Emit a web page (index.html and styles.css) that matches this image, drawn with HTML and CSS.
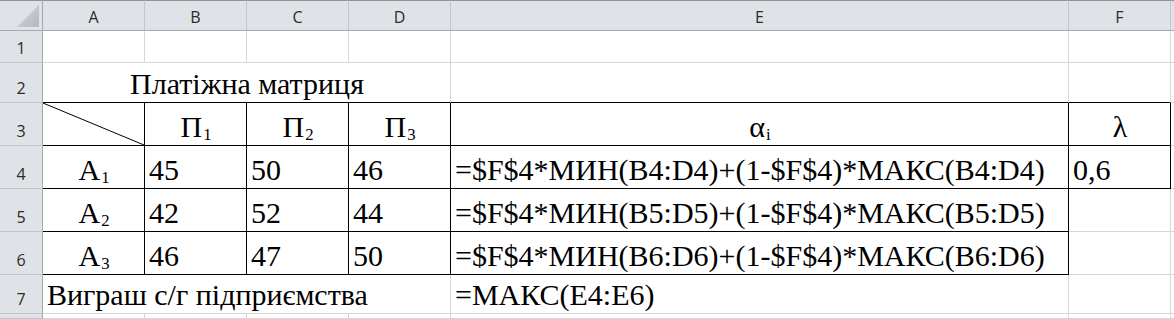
FILE: index.html
```html
<!DOCTYPE html>
<html lang="uk">
<head>
<meta charset="utf-8">
<title>Платіжна матриця</title>
<link rel="stylesheet" href="styles.css">
</head>
<body>
<div class="sheet">
  <!-- header row -->
  <div class="hd corner"><svg class="tri" width="42" height="30" viewBox="0 0 42 30"><defs><linearGradient id="g" x1="0" y1="0" x2="1" y2="1"><stop offset="0" stop-color="#d3d6da"/><stop offset="1" stop-color="#b4b8bc"/></linearGradient></defs><polygon points="39,5 39,27 17,27" fill="url(#g)"/></svg></div>
  <div class="hd ch">A</div>
  <div class="hd ch">B</div>
  <div class="hd ch">C</div>
  <div class="hd ch">D</div>
  <div class="hd ch">E</div>
  <div class="hd ch">F</div>
  <div class="hd ch"></div>

  <!-- row 1 -->
  <div class="rh">1</div>
  <div class="c"></div><div class="c"></div><div class="c"></div><div class="c"></div><div class="c"></div><div class="c"></div><div class="c"></div>

  <!-- row 2 -->
  <div class="rh">2</div>
  <div class="c span4 mid kb">Платіжна матриця</div>
  <div class="c kb"></div>
  <div class="c kb"></div>
  <div class="c"></div>

  <!-- row 3 -->
  <div class="rh">3</div>
  <div class="c kb kr diag"><svg class="slash" viewBox="0 0 100 41" preserveAspectRatio="none"><line x1="0" y1="0" x2="100" y2="41" stroke="#000" stroke-width="1" vector-effect="non-scaling-stroke"/></svg></div>
  <div class="c kb kr mid">П<sub class="ix">1</sub></div>
  <div class="c kb kr mid">П<sub class="ix">2</sub></div>
  <div class="c kb kr mid">П<sub class="ix">3</sub></div>
  <div class="c kb kr mid">α<sub class="ix">i</sub></div>
  <div class="c kb kr mid">λ</div>
  <div class="c"></div>

  <!-- row 4 -->
  <div class="rh">4</div>
  <div class="c kb kr mid">A<sub class="ix">1</sub></div>
  <div class="c kb kr">45</div>
  <div class="c kb kr">50</div>
  <div class="c kb kr">46</div>
  <div class="c kb kr">=$F$4*МИН(B4:D4)+(1-$F$4)*МАКС(B4:D4)</div>
  <div class="c kb kr">0,6</div>
  <div class="c"></div>

  <!-- row 5 -->
  <div class="rh">5</div>
  <div class="c kb kr mid">A<sub class="ix">2</sub></div>
  <div class="c kb kr">42</div>
  <div class="c kb kr">52</div>
  <div class="c kb kr">44</div>
  <div class="c kb kr">=$F$4*МИН(B5:D5)+(1-$F$4)*МАКС(B5:D5)</div>
  <div class="c"></div>
  <div class="c"></div>

  <!-- row 6 -->
  <div class="rh">6</div>
  <div class="c kb kr mid">A<sub class="ix">3</sub></div>
  <div class="c kb kr">46</div>
  <div class="c kb kr">47</div>
  <div class="c kb kr">50</div>
  <div class="c kb kr">=$F$4*МИН(B6:D6)+(1-$F$4)*МАКС(B6:D6)</div>
  <div class="c"></div>
  <div class="c"></div>

  <!-- row 7 -->
  <div class="rh">7</div>
  <div class="c span4">Виграш с/г підприємства</div>
  <div class="c">=МАКС(E4:E6)</div>
  <div class="c"></div>
  <div class="c"></div>

  <!-- row 8 -->
  <div class="rh"></div>
  <div class="c"></div><div class="c"></div><div class="c"></div><div class="c"></div><div class="c"></div><div class="c"></div><div class="c"></div>
</div>
</body>
</html>
```

FILE: styles.css
```css
* { box-sizing: border-box; }
html, body { margin: 0; padding: 0; background: #fff; }
body { width: 1174px; height: 319px; overflow: hidden; }

.sheet {
  display: grid;
  grid-template-columns: 43px 102px 102px 102px 102px 618px 102px 1fr;
  grid-template-rows: 31px 32px 40px 43px 43px 43px 43px 39px 1fr;
  width: 1174px;
  height: 319px;
}

/* headers */
.hd {
  background: #dfe2e6;
  border-top: 1px solid #8f9296;
  border-bottom: 1px solid #a5a9ad;
  border-right: 1px solid #c2c6ca;
}
.corner { border-right-color: #a5a9ad; padding: 0; }
.tri { display: block; margin-top: -1px; }
.ch {
  display: flex;
  align-items: flex-end;
  justify-content: center;
  padding-bottom: 3px;
  font-family: "Open Sans", "Liberation Sans", sans-serif;
  font-size: 16px;
  line-height: 20px;
  color: #2b2b2b;
}
.rh {
  background: #dfe2e6;
  border-right: 1px solid #a5a9ad;
  border-bottom: 1px solid #c2c6ca;
  display: flex;
  align-items: flex-end;
  justify-content: center;
  padding-bottom: 4px;
  font-family: "Open Sans", "Liberation Sans", sans-serif;
  font-size: 16px;
  line-height: 20px;
  color: #2b2b2b;
}

/* cells */
.c {
  border-right: 1px solid #d6d6d6;
  border-bottom: 1px solid #d6d6d6;
  display: flex;
  align-items: flex-end;
  padding: 0 3px 1px 4px;
  font-family: "Liberation Serif", "Times New Roman", serif;
  font-size: 30px;
  color: #000;
  white-space: nowrap;
  overflow: visible;
}
.span4 { grid-column: span 4; }
.mid { justify-content: center; }
.kb { border-bottom-color: #000; }
.kr { border-right-color: #000; }

.diag { padding: 0; align-items: stretch; }
.slash { display: block; width: 100%; height: 100%; }

.ix {
  font-size: 0.56em;
  vertical-align: -6px;
  line-height: 1;
  margin-left: 1px;
}
```
